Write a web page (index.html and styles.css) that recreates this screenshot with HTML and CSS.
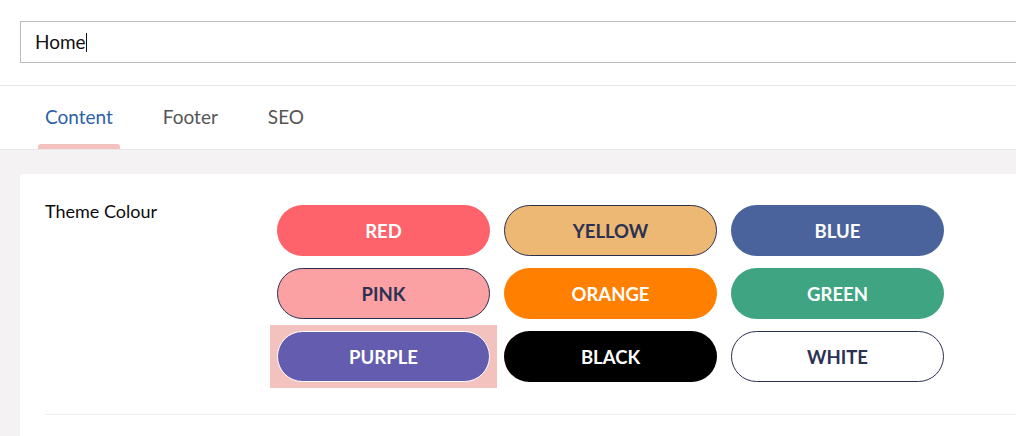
FILE: index.html
```html
<!DOCTYPE html>
<html>
<head>
<meta charset="utf-8">
<link rel="stylesheet" href="styles.css">
</head>
<body>
<div class="page">
  <header class="header">
    <div class="title-input"><span class="title-text">Home</span><span class="caret"></span></div>
  </header>
  <nav class="tabs">
    <div class="tab active"><span class="tab-label">Content</span><span class="tab-bar"></span></div>
    <div class="tab"><span class="tab-label">Footer</span><span class="tab-bar"></span></div>
    <div class="tab"><span class="tab-label">SEO</span><span class="tab-bar"></span></div>
  </nav>
  <main class="panel">
    <section class="card">
      <div class="field">
        <div class="field-label">Theme Colour</div>
        <div class="swatches">
          <div class="swatch"><div class="pill red">RED</div></div>
          <div class="swatch"><div class="pill yellow">YELLOW</div></div>
          <div class="swatch"><div class="pill blue">BLUE</div></div>
          <div class="swatch"><div class="pill pink">PINK</div></div>
          <div class="swatch"><div class="pill orange">ORANGE</div></div>
          <div class="swatch"><div class="pill green">GREEN</div></div>
          <div class="swatch selected"><div class="pill purple">PURPLE</div></div>
          <div class="swatch"><div class="pill black">BLACK</div></div>
          <div class="swatch"><div class="pill white">WHITE</div></div>
        </div>
      </div>
      <div class="divider"></div>
    </section>
  </main>
</div>
</body>
</html>
```
FILE: styles.css
```css
* { box-sizing: border-box; }
html, body {
  margin: 0;
  padding: 0;
  background: #ffffff;
}
body {
  font-family: Lato, "Open Sans", "Liberation Sans", sans-serif;
  color: #111;
  overflow: hidden;
  width: 1016px;
  height: 436px;
}
.page {
  width: 1016px;
  height: 436px;
  display: flex;
  flex-direction: column;
  overflow: hidden;
}
.header {
  padding: 21px 0 22px 20px;
  border-bottom: 1px solid #e7e7e7;
  height: 86px;
}
.title-input {
  width: 1040px;
  height: 42px;
  border: 1px solid #bcbcbc;
  display: flex;
  align-items: center;
  padding-left: 14px;
  font-size: 19px;
  color: #111;
}
.title-text {
  position: relative;
  top: -1px;
}
.caret {
  display: inline-block;
  width: 1px;
  height: 19px;
  background: #111;
}
.tabs {
  display: flex;
  gap: 36px;
  padding: 19px 0 0 38px;
  height: 64px;
  border-bottom: 1px solid #e8e6e7;
}
.tab {
  display: flex;
  flex-direction: column;
  align-items: stretch;
}
.tab-label {
  padding: 0 7px;
  font-size: 19px;
  line-height: 24px;
  color: #555;
}
.tab-bar {
  margin-top: 15px;
  height: 5px;
  border-radius: 3px 3px 0 0;
}
.tab.active .tab-label { color: #2e5fa9; }
.tab.active .tab-bar { background: #f4c2be; }
.panel {
  flex: 1;
  background: #f4f2f3;
  padding: 24px 0 0 20px;
}
.card {
  background: #fff;
  border-radius: 3px 0 0 0;
  height: 100%;
  padding: 25px 0 0 25px;
}
.field {
  display: flex;
}
.field-label {
  width: 225px;
  font-size: 18px;
  line-height: 24px;
  color: #0c0c0c;
}
.swatches {
  display: grid;
  grid-template-columns: repeat(3, 227px);
  grid-auto-rows: 63px;
}
.swatch {
  padding: 6px 7px;
}
.swatch.selected {
  background: #f4c2be;
}
.pill {
  height: 51px;
  border-radius: 26px;
  border: 1px solid transparent;
  display: flex;
  align-items: center;
  justify-content: center;
  font-weight: 700;
  font-size: 18.5px;
  color: #fff;
}
.red { background: #fe626b; }
.yellow { background: #ecb874; border-color: #2b3050; color: #2b3152; }
.blue { background: #4a639c; }
.pink { background: #fba1a4; border-color: #2b3050; color: #2b3152; }
.orange { background: #ff8000; }
.green { background: #3fa482; }
.purple { background: #645daf; border-color: #ffffff; }
.black { background: #000; }
.white { background: #fff; border-color: #2b3050; color: #2b3152; }
.divider {
  margin-top: 26px;
  height: 1px;
  background: #efefef;
}
```
